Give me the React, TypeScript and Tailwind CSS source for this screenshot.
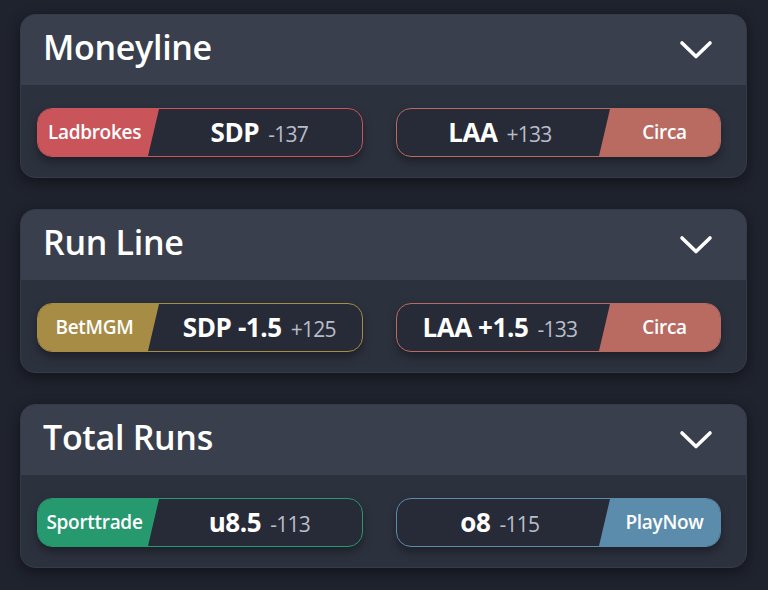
type Side = {
  book: string;
  color: string;
  main: string;
  odds: string;
};

type Market = {
  title: string;
  left: Side;
  right: Side;
};

const markets: Market[] = [
  {
    title: 'Moneyline',
    left: { book: 'Ladbrokes', color: 'ladbrokes', main: 'SDP', odds: '-137' },
    right: { book: 'Circa', color: 'circa', main: 'LAA', odds: '+133' },
  },
  {
    title: 'Run Line',
    left: { book: 'BetMGM', color: 'betmgm', main: 'SDP -1.5', odds: '+125' },
    right: { book: 'Circa', color: 'circa', main: 'LAA +1.5', odds: '-133' },
  },
  {
    title: 'Total Runs',
    left: { book: 'Sporttrade', color: 'sporttrade', main: 'u8.5', odds: '-113' },
    right: { book: 'PlayNow', color: 'playnow', main: 'o8', odds: '-115' },
  },
];

const bookStyles: Record<string, { bg: string; border: string }> = {
  ladbrokes: { bg: 'bg-[#c9555a]', border: 'border-[#c9555a]' },
  circa: { bg: 'bg-[#b96b62]', border: 'border-[#b96b62]' },
  betmgm: { bg: 'bg-[#a68c45]', border: 'border-[#a68c45]' },
  sporttrade: { bg: 'bg-[#27996f]', border: 'border-[#27996f]' },
  playnow: { bg: 'bg-[#5b8cab]', border: 'border-[#5b8cab]' },
};

function Chevron() {
  return (
    <svg width="34" height="20" viewBox="0 0 34 20" fill="none" className="shrink-0">
      <polyline
        points="3,3 17,16.5 31,3"
        stroke="white"
        strokeWidth="3.6"
        strokeLinecap="round"
        strokeLinejoin="round"
      />
    </svg>
  );
}

function Pill({ side, flip }: { side: Side; flip?: boolean }) {
  const s = bookStyles[side.color];
  const label = (
    <div
      className={`${s.bg} h-full w-[121px] flex items-center justify-center text-white text-[19px] font-semibold tracking-[-0.3px] shrink-0 ${
        flip
          ? 'pl-[10px] [clip-path:polygon(11px_0,100%_0,100%_100%,0_100%)]'
          : 'pr-[8px] [clip-path:polygon(0_0,100%_0,calc(100%-11px)_100%,0_100%)]'
      }`}
    >
      {side.book}
    </div>
  );
  return (
    <div
      className={`flex-1 h-[49px] rounded-[15px] border-[1.5px] ${s.border} bg-[#272b37] overflow-hidden flex items-center shadow-[0_5px_10px_rgba(0,0,0,0.35)]`}
    >
      {!flip && label}
      <div className={`flex-1 flex items-baseline justify-center gap-[9px] ${flip ? 'pl-[4px]' : 'pr-[2px]'}`}>
        <span className="text-white text-[26px] font-bold tracking-[-0.4px]">{side.main}</span>
        <span className="text-[#b9bdc9] text-[21px] font-normal tracking-[-0.8px]">{side.odds}</span>
      </div>
      {flip && label}
    </div>
  );
}

function MarketCard({ market }: { market: Market }) {
  return (
    <div className="rounded-[15px] bg-[#2c313e] overflow-hidden shadow-[0_4px_14px_rgba(0,0,0,0.45)] border border-[#343a48]">
      <div className="h-[70px] bg-[#393f4d] flex items-center justify-between pl-[22px] pr-[33px]">
        <h2 className="text-white text-[34px] font-semibold tracking-[-0.3px] -mt-[6px]">{market.title}</h2>
        <Chevron />
      </div>
      <div className="flex gap-[33px] pl-[16px] pr-[25px] pt-[23px] pb-[20px]">
        <Pill side={market.left} />
        <Pill side={market.right} flip />
      </div>
    </div>
  );
}

export default function App() {
  return (
    <div
      className="w-[768px] h-[590px] bg-[#1f232e] pt-[14px] pl-[20px] pr-[21px] flex flex-col gap-[31px]"
      style={{ fontFamily: '"Open Sans", "Noto Sans", sans-serif' }}
    >
      {markets.map((m) => (
        <MarketCard key={m.title} market={m} />
      ))}
    </div>
  );
}
